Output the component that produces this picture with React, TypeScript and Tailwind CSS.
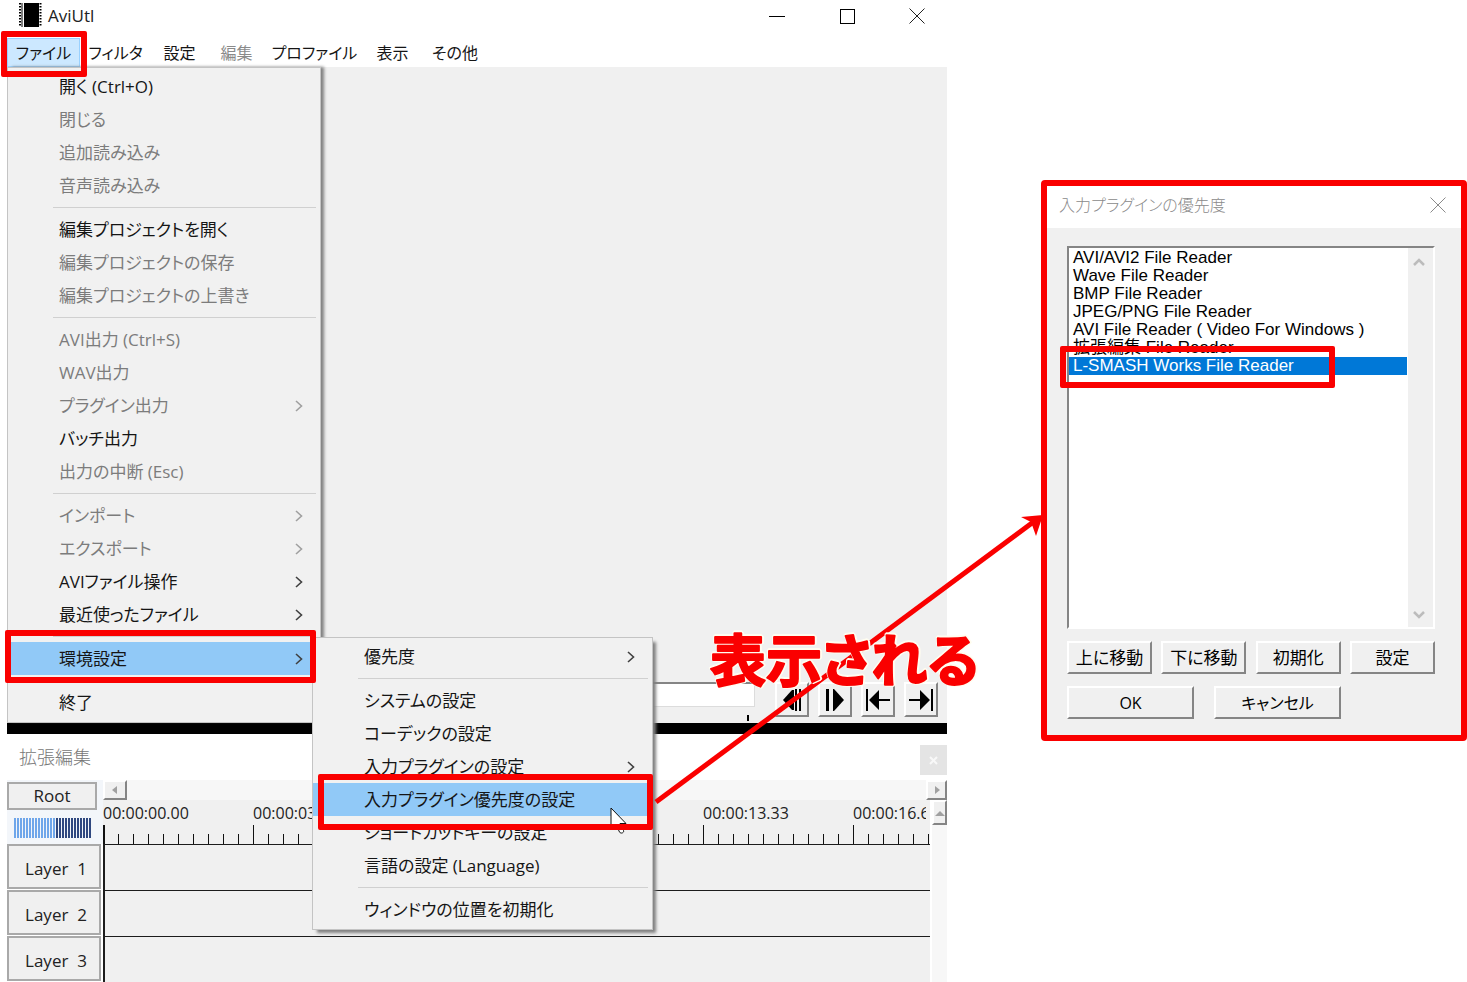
import { useState } from 'react'
import type { ReactNode } from 'react'

interface MenuEntry {
  label?: string
  disabled?: boolean
  submenu?: boolean
  active?: boolean
  separator?: boolean
}

const MENU_BAR = [
  { label: 'ファイル', width: 'w-[73px]', active: true },
  { label: 'フィルタ', width: 'w-[71px]' },
  { label: '設定', width: 'w-[57px]' },
  { label: '編集', width: 'w-[57px]', disabled: true },
  { label: 'プロファイル', width: 'w-[99px]' },
  { label: '表示', width: 'w-[57px]' },
  { label: 'その他', width: 'w-[68px]' },
]

const FILE_MENU: MenuEntry[] = [
  { label: '開く (Ctrl+O)' },
  { label: '閉じる', disabled: true },
  { label: '追加読み込み', disabled: true },
  { label: '音声読み込み', disabled: true },
  { separator: true },
  { label: '編集プロジェクトを開く' },
  { label: '編集プロジェクトの保存', disabled: true },
  { label: '編集プロジェクトの上書き', disabled: true },
  { separator: true },
  { label: 'AVI出力 (Ctrl+S)', disabled: true },
  { label: 'WAV出力', disabled: true },
  { label: 'プラグイン出力', disabled: true, submenu: true },
  { label: 'バッチ出力' },
  { label: '出力の中断 (Esc)', disabled: true },
  { separator: true },
  { label: 'インポート', disabled: true, submenu: true },
  { label: 'エクスポート', disabled: true, submenu: true },
  { label: 'AVIファイル操作', submenu: true },
  { label: '最近使ったファイル', submenu: true },
  { separator: true },
  { label: '環境設定', submenu: true, active: true },
  { separator: true },
  { label: '終了' },
]

const SETTINGS_MENU: MenuEntry[] = [
  { label: '優先度', submenu: true },
  { separator: true },
  { label: 'システムの設定' },
  { label: 'コーデックの設定' },
  { label: '入力プラグインの設定', submenu: true },
  { label: '入力プラグイン優先度の設定', active: true },
  { label: 'ショートカットキーの設定' },
  { label: '言語の設定 (Language)' },
  { separator: true },
  { label: 'ウィンドウの位置を初期化' },
]

const READERS = [
  'AVI/AVI2 File Reader',
  'Wave File Reader',
  'BMP File Reader',
  'JPEG/PNG File Reader',
  'AVI File Reader ( Video For Windows )',
  '拡張編集 File Reader',
  'L-SMASH Works File Reader',
]

const TIMES = ['00:00:00.00', '00:00:03.33', '00:00:06.66', '00:00:10.00', '00:00:13.33', '00:00:16.66']
const LAYERS = ['Layer  1', 'Layer  2', 'Layer  3']

function CloseIcon() {
  return (
    <svg width="16" height="16" viewBox="0 0 16 16" fill="none" stroke="currentColor">
      <path d="M0.5 0.5 15.5 15.5M15.5 0.5 0.5 15.5" />
    </svg>
  )
}

function Menu({ items, className }: { items: MenuEntry[]; className: string }) {
  return (
    <div
      role="menu"
      className={`absolute border border-[#c4c4c4] bg-[#f1f1f1] pb-[3px] pt-[2px] text-[17px] ${className}`}
    >
      {items.map((item, idx) =>
        item.separator ? (
          <div key={idx} className="flex h-[11px] items-center pl-[45px] pr-1">
            <div className="h-px flex-1 bg-[#d0d0d0]" />
          </div>
        ) : (
          <button
            key={idx}
            role="menuitem"
            disabled={item.disabled}
            className={`flex h-[33px] w-full items-center justify-between pl-[51px] pr-[17px] text-left ${
              item.active ? 'bg-[#91c9f7]' : ''
            } ${item.disabled ? 'text-[#7c7c7c]' : 'text-[#151515]'}`}
          >
            <span className="whitespace-nowrap">{item.label}</span>
            {item.submenu && (
              <svg
                width="8"
                height="12"
                viewBox="0 0 8 12"
                fill="none"
                stroke={item.disabled ? '#a0a0a0' : '#404040'}
                strokeWidth="1.6"
              >
                <path d="M1 1 6.5 6 1 11" />
              </svg>
            )}
          </button>
        )
      )}
    </div>
  )
}

// Classic raised Win32 button
function RaisedButton({ children, className, label }: { children: ReactNode; className: string; label?: string }) {
  return (
    <button
      aria-label={label}
      className={`flex items-center justify-center border-2 border-b-[#858585] border-l-white border-r-[#858585] border-t-white bg-[#f0f0f0] ${className}`}
    >
      {children}
    </button>
  )
}

function Triangle({ d }: { d: string }) {
  return (
    <svg width="10" height="10" viewBox="0 0 10 10" fill="#a0a0a0">
      <path d={d} />
    </svg>
  )
}

function PlaybackBar() {
  return (
    <div className="flex items-start pb-[2px] pr-[9px]">
      <div className="flex flex-1 flex-col items-end">
        <div className="h-[25px] w-full border-b border-r border-t-2 border-b-[#dcdcdc] border-r-[#dcdcdc] border-t-[#858585] bg-white" />
        <div className="mr-[6px] mt-2 h-[6px] w-[2px] bg-black" />
      </div>
      <div className="ml-5 flex gap-[9px]">
        <RaisedButton label="前のフレーム" className="h-[35px] w-[34px]">
          <svg width="20" height="24" viewBox="0 0 20 24">
            <path d="M12 2v20h-2L1 12 10 2z" />
            <path d="M13 1h2v22h-2zM17 1h2v22h-2z" />
          </svg>
        </RaisedButton>
        <RaisedButton label="次のフレーム" className="h-[35px] w-[34px]">
          <svg width="20" height="24" viewBox="0 0 20 24">
            <path d="M8 1v22h1L19 12 9 1z" />
            <path d="M1 1h3v22H1z" />
          </svg>
        </RaisedButton>
        <RaisedButton label="先頭へ" className="h-[35px] w-[34px]">
          <svg width="26" height="24" viewBox="0 0 26 24">
            <path d="M1 1h2v22H1zM14 2v20L4 12z" />
            <path d="M12 11h13v2H12z" />
          </svg>
        </RaisedButton>
        <RaisedButton label="末尾へ" className="h-[35px] w-[34px]">
          <svg width="26" height="24" viewBox="0 0 26 24">
            <path d="M23 1h2v22h-2zM12 2v20l10-10z" />
            <path d="M1 11h13v2H1z" />
          </svg>
        </RaisedButton>
      </div>
    </div>
  )
}

function Timeline() {
  return (
    <div className="flex bg-[#f0f0f0]">
      <div className="w-24 shrink-0">
        <div className="h-16 bg-[#f3f6fa] pt-[2px]">
          <button className="h-7 w-[90px] border-2 border-[#a9a9a9] bg-[#f0f0f0] text-[17px] leading-6">Root</button>
          <svg className="ml-[7px] mt-2" width="78" height="20">
            {Array.from({ length: 26 }, (_, i) => (
              <rect key={i} x={i * 3} y="0" width="2" height="20" fill={i < 14 ? '#6fa6ea' : '#2f4880'} />
            ))}
          </svg>
        </div>
        {LAYERS.map((layer) => (
          <div key={layer} className="h-[46px] bg-white">
            <button className="h-[45px] w-[94px] whitespace-pre border-2 border-[#a9a9a9] bg-[#f0f0f0] pl-1 pt-1 text-[17px]">
              {layer}
            </button>
          </div>
        ))}
      </div>

      <div className="min-w-0 flex-1">
        <div className="flex h-5 justify-between bg-[#f7f7f7]">
          <RaisedButton label="左へ" className="w-6">
            <Triangle d="M7 1v8L2 5z" />
          </RaisedButton>
          <RaisedButton label="右へ" className="w-[21px]">
            <Triangle d="M3 1v8l5-4z" />
          </RaisedButton>
        </div>
        <div className="flex">
          <div className="min-w-0 flex-1">
            <div className="flex h-[25px] overflow-hidden pr-1">
              <div className="flex min-w-0 flex-1 overflow-hidden">
                {TIMES.map((time) => (
                  <span key={time} className="w-[150px] shrink-0 text-base leading-[26px]">
                    {time}
                  </span>
                ))}
              </div>
            </div>
            <svg className="block h-[19px] w-full" shapeRendering="crispEdges">
              {Array.from({ length: 120 }, (_, i) => (
                <rect key={i} x={i * 15} y={i % 10 === 0 ? 0 : 9} width={i === 0 ? 2 : 1} height="19" fill="#111" />
              ))}
            </svg>
            {LAYERS.map((layer) => (
              <div key={layer} className="h-[46px] border-l-2 border-t border-[#1c1c1c]" />
            ))}
          </div>
          <div className="w-[17px] border-l-2 border-white bg-[#f7f7f7]">
            <RaisedButton label="上へ" className="h-[25px] w-full">
              <Triangle d="M0 8h10L5 3z" />
            </RaisedButton>
          </div>
        </div>
      </div>
    </div>
  )
}

function MainWindow() {
  return (
    <main className="relative min-w-0 flex-1">
      <header className="flex h-[33px] items-start pl-3 pr-[15px]">
        <svg className="mt-[3px]" width="23" height="24" viewBox="0 0 23 24">
          <path d="M5 0h15v24H5z" />
          <path d="M1 0v24M21.500 0v24" stroke="#000" strokeWidth="2" strokeDasharray="1.500 1.500" />
          <path d="M3 0v24" stroke="#000" />
        </svg>
        <h1 className="ml-[6px] flex-1 text-[17px] leading-8">AviUtl</h1>
        <div className="flex gap-10">
          <button aria-label="最小化" className="flex h-8 w-[30px] items-center justify-center">
            <span className="h-px w-4 bg-black" />
          </button>
          <button aria-label="最大化" className="flex h-8 w-[30px] items-center justify-center">
            <span className="size-[15px] border border-black" />
          </button>
          <button aria-label="閉じる" className="flex h-8 w-[30px] items-center justify-center">
            <CloseIcon />
          </button>
        </div>
      </header>

      <nav className="flex h-[34px] items-end">
        {MENU_BAR.map((item) => (
          <button
            key={item.label}
            disabled={item.disabled}
            className={`h-[29px] whitespace-nowrap border text-base ${item.width} ${
              item.active ? 'border-[#99d1ff] bg-[#cce8ff]' : 'border-transparent'
            } ${item.disabled ? 'text-[#8a8a8a]' : 'text-[#151515]'}`}
          >
            {item.label}
          </button>
        ))}
      </nav>

      <section className="flex min-h-[656px] flex-col justify-end bg-[#f0f0f0]">
        <PlaybackBar />
      </section>
      <div className="h-[11px] bg-black" />

      <div className="flex h-[46px] items-center justify-between bg-white pl-3">
        <h2 className="text-[18px] font-light text-[#777]">拡張編集</h2>
        <button aria-label="閉じる" className="mt-[6px] flex h-[30px] w-[27px] items-center justify-center bg-[#e4e4e4]">
          <svg width="9" height="9" viewBox="0 0 9 9" stroke="#f8f8f8" strokeWidth="2">
            <path d="M1 1l7 7M8 1 1 8" />
          </svg>
        </button>
      </div>
      <Timeline />

      <Menu items={FILE_MENU} className="left-0 top-[67px] w-[314px] shadow-[4px_-1px_3px_-1px_#808080]" />
      <Menu
        items={SETTINGS_MENU}
        className="left-[305px] top-[637px] w-[341px] shadow-[4px_4px_3px_-1px_#808080]"
      />
    </main>
  )
}

function PriorityDialog() {
  const [selected, setSelected] = useState(READERS.length - 1)

  return (
    <aside className="relative mt-[180px] w-[426px] shrink-0 self-start rounded-sm border-6 border-[#fa0000] bg-[#f0f0f0]">
      <header className="flex h-[42px] items-center justify-between bg-white pb-1 pl-3 pr-2 text-[#8a8a8a]">
        <h2 className="text-base font-light">入力プラグインの優先度</h2>
        <button aria-label="閉じる" className="flex w-[30px] justify-center">
          <CloseIcon />
        </button>
      </header>

      <div className="pb-4 pl-5 pr-[26px] pt-[18px]">
        <div className="flex h-[383px] border-2 border-b-white border-l-[#858585] border-r-white border-t-[#858585] bg-white">
          <ul role="listbox" aria-label="入力プラグイン" className="flex-1 pr-px pt-px">
            {READERS.map((reader, idx) => (
              <li
                key={reader}
                role="option"
                aria-selected={idx === selected}
                onClick={() => setSelected(idx)}
                className={`h-[18px] whitespace-nowrap pl-1 font-['Liberation_Sans','Noto_Sans_CJK_JP',sans-serif] text-[17px] leading-[18px] ${
                  idx === selected ? 'bg-[#0078d7] text-white' : 'text-black'
                }`}
              >
                {reader}
              </li>
            ))}
          </ul>
          <div className="flex w-[25px] flex-col items-center justify-between bg-[#f0f0f0] pb-2 pr-1 pt-[10px] text-[#bcbcbc]">
            <svg width="12" height="8" viewBox="0 0 12 8" fill="none" stroke="currentColor" strokeWidth="2.500">
              <path d="M1 7l5-5 5 5" />
            </svg>
            <svg width="12" height="8" viewBox="0 0 12 8" fill="none" stroke="currentColor" strokeWidth="2.500">
              <path d="M1 1l5 5 5-5" />
            </svg>
          </div>
        </div>
        <div className="mt-3 flex justify-between">
          {['上に移動', '下に移動', '初期化', '設定'].map((label) => (
            <RaisedButton key={label} className="h-[33px] w-[85px] whitespace-nowrap text-[17px] text-black">
              {label}
            </RaisedButton>
          ))}
        </div>
        <div className="mt-3 flex gap-5">
          {['OK', 'キャンセル'].map((label) => (
            <RaisedButton key={label} className="h-[33px] w-[127px] text-base text-black">
              {label}
            </RaisedButton>
          ))}
        </div>
      </div>
      <Highlight className="left-[13px] top-[160px] h-[42px] w-[275px]" />
    </aside>
  )
}

function Highlight({ className }: { className: string }) {
  return <div className={`pointer-events-none absolute rounded-xs border-6 border-[#fa0000] ${className}`} />
}

export default function App() {
  return (
    <div className="relative flex gap-[94px] overflow-hidden bg-white pl-[7px] font-['Open_Sans','Noto_Sans_CJK_JP',sans-serif] text-[18px] leading-6 text-[#222] [font-feature-settings:'palt']">
      <MainWindow />
      <PriorityDialog />

      {/* Mouse pointer, partly under the frame */}
      <svg className="pointer-events-none absolute left-[610px] top-[807px]" width="18" height="30" fill="#fff" stroke="#111">
        <path d="M1 1v21l5-4.500 3.500 7.500c1 2 5 1 4-1.500l-3.500-7h6z" />
      </svg>

      {/* Red annotations above the windows */}
      <Highlight className="left-px top-[31px] h-[46px] w-[86px]" />
      <Highlight className="left-[5px] top-[630px] h-[53px] w-[311px]" />
      <Highlight className="left-[318px] top-[774px] h-[56px] w-[335px]" />
      <svg
        className="pointer-events-none absolute left-0 top-0"
        width="1060"
        height="840"
        viewBox="0 0 1060 840"
        fill="none"
      >
        <path d="M656 802 1036 520" stroke="#fa0000" strokeWidth="5" />
        <path d="M1043 515 1021 517 1031 522 1036 536z" fill="#fa0000" />
        <text
          x="710"
          y="681"
          fontSize="56"
          fontWeight="700"
          fill="#fa0000"
          stroke="#fa0000"
          strokeWidth="2"
          strokeLinejoin="round"
          className="[filter:drop-shadow(1px_1px_0_#fffdf0)_drop-shadow(-1px_-1px_0_#fffdf0)_drop-shadow(1px_-1px_0_#fffdf0)]"
        >
          表示される
        </text>
      </svg>
    </div>
  )
}
